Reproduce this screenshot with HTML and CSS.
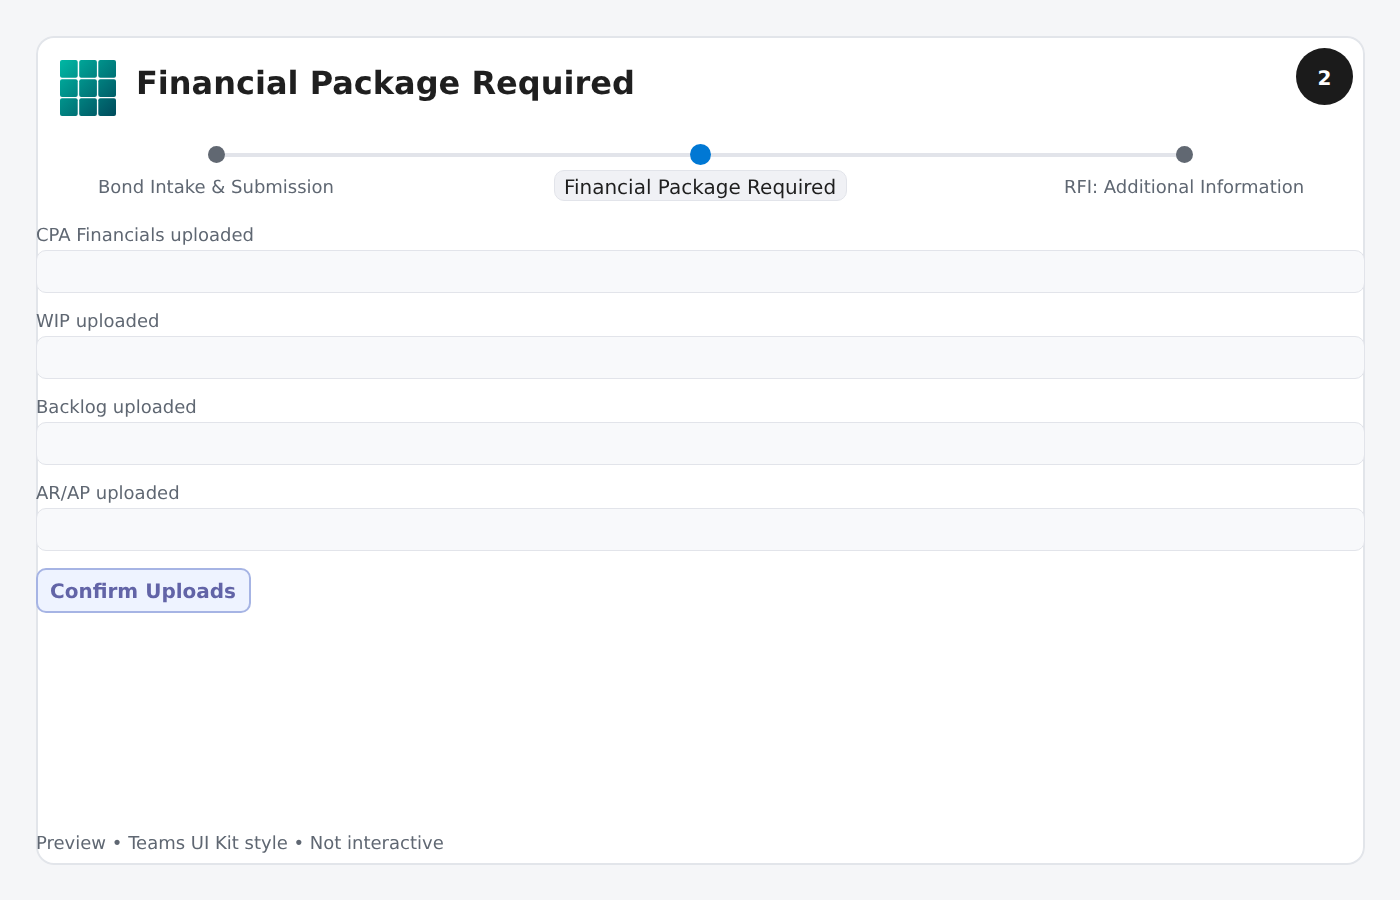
FILE: index.html
```html
<!DOCTYPE html>
<html lang="en">
<head>
<meta charset="utf-8">
<title>Financial Package Required</title>
<link rel="stylesheet" href="styles.css">
</head>
<body>
<main class="card">
  <div class="badge">2</div>
  <header class="head">
    <svg class="logo" width="56" height="56" viewBox="0 0 56 56" aria-hidden="true">
      <defs>
        <linearGradient id="g" gradientUnits="userSpaceOnUse" x1="0" y1="0" x2="56" y2="56">
          <stop offset="0" stop-color="#00b8a4"/>
          <stop offset="1" stop-color="#004b5c"/>
        </linearGradient>
      </defs>
      <g fill="url(#g)">
        <rect x="0" y="0" width="17.7" height="17.7" rx="2"/>
        <rect x="19.2" y="0" width="17.7" height="17.7" rx="2"/>
        <rect x="38.3" y="0" width="17.7" height="17.7" rx="2"/>
        <rect x="0" y="19.2" width="17.7" height="17.7" rx="2"/>
        <rect x="19.2" y="19.2" width="17.7" height="17.7" rx="2"/>
        <rect x="38.3" y="19.2" width="17.7" height="17.7" rx="2"/>
        <rect x="0" y="38.3" width="17.7" height="17.7" rx="2"/>
        <rect x="19.2" y="38.3" width="17.7" height="17.7" rx="2"/>
        <rect x="38.3" y="38.3" width="17.7" height="17.7" rx="2"/>
      </g>
    </svg>
    <h1 class="title">Financial Package Required</h1>
  </header>
  <div class="stepper">
    <div class="step">
      <span class="dot"></span>
      <span class="step-label">Bond Intake &amp; Submission</span>
    </div>
    <div class="step">
      <span class="dot dot-active"></span>
      <span class="step-label step-label-active">Financial Package Required</span>
    </div>
    <div class="step">
      <span class="dot"></span>
      <span class="step-label">RFI: Additional Information</span>
    </div>
  </div>
  <form class="form">
    <div class="field"><label class="label">CPA Financials uploaded</label><div class="input"></div></div>
    <div class="field"><label class="label">WIP uploaded</label><div class="input"></div></div>
    <div class="field"><label class="label">Backlog uploaded</label><div class="input"></div></div>
    <div class="field"><label class="label">AR/AP uploaded</label><div class="input"></div></div>
    <div class="action"><span class="button">Confirm Uploads</span></div>
  </form>
  <footer class="foot">Preview • Teams UI Kit style • Not interactive</footer>
</main>
</body>
</html>
```
FILE: styles.css
```css
* { box-sizing: border-box; }
html, body { margin: 0; height: 100%; }
body {
  background: #f5f6f8;
  padding: 36px;
  font-family: "DejaVu Sans", sans-serif;
  color: #1f1f1f;
  text-rendering: geometricPrecision;
}
.card {
  position: relative;
  width: 1329px;
  height: 829px;
  background: #fff;
  border-radius: 18px;
  box-shadow: inset 0 0 0 2px #e2e5ea;
  display: flex;
  flex-direction: column;
  will-change: opacity;
}
.badge {
  position: absolute;
  top: 12px;
  left: 1260px;
  width: 57px;
  height: 57px;
  padding-top: 3px;
  border-radius: 50%;
  background: #1b1b1b;
  color: #fff;
  font-weight: 700;
  font-size: 20px;
  display: flex;
  align-items: center;
  justify-content: center;
}
.head {
  display: flex;
  align-items: flex-start;
  gap: 20px;
  padding: 24px 0 0 24px;
  height: 109px;
}
.logo { display: block; flex: none; }
.title {
  margin: 1px 0 0;
  font-size: 32px;
  line-height: 44px;
  font-weight: 700;
  color: #1f1f1f;
}
.stepper {
  display: grid;
  grid-template-columns: repeat(3, 484px);
  justify-content: center;
  height: 77px;
  padding-right: 1px;
  position: relative;
}
.stepper::before {
  content: "";
  position: absolute;
  left: 180px;
  right: 181px;
  top: 8px;
  height: 4px;
  background: #e2e4ea;
}
.step { display: flex; flex-direction: column; align-items: center; position: relative; }
.dot {
  width: 17px;
  height: 17px;
  margin-top: 1px;
  border-radius: 50%;
  background: #616872;
}
.dot-active { width: 21px; height: 21px; margin-top: -1px; margin-bottom: -2px; background: #0078d4; }
.step-label {
  margin-top: 12px;
  height: 27px;
  font-size: 18px;
  line-height: 26px;
  color: #5f6772;
  white-space: nowrap;
}
.step-label-active {
  margin-top: 7px;
  margin-left: 1px;
  height: 31px;
  padding: 3px 10px 0 9px;
  font-size: 20px;
  color: #1f1f1f;
  background: #f0f1f5;
  border: 1px solid #e2e4ea;
  border-radius: 10px;
}
.form { display: flex; flex-direction: column; }
.field { display: flex; flex-direction: column; height: 86px; }
.label { font-size: 18px; line-height: 26px; height: 28px; padding-top: 1px; color: #5f6772; }
.input {
  height: 43px;
  background: #f8f9fb;
  border: 1px solid #e2e4ea;
  border-radius: 10px;
}
.action { margin-top: 2px; }
.button {
  display: inline-block;
  height: 45px;
  padding: 0 13px 0 12px;
  line-height: 42px;
  font-size: 20px;
  font-weight: 700;
  color: #6264a7;
  background: #eef3ff;
  border: 2px solid #a6b4e4;
  border-radius: 10px;
}
.foot {
  margin-top: auto;
  font-size: 18px;
  line-height: 26px;
  height: 34px;
  color: #5f6772;
}
```
